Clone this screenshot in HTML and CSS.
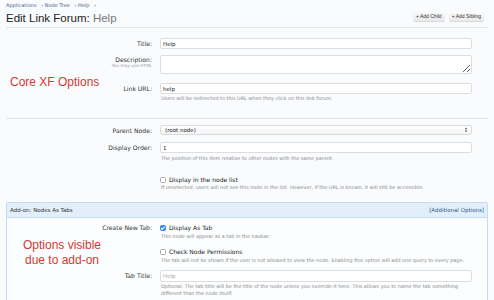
FILE: index.html
```html
<!DOCTYPE html>
<html lang="en">
<head>
    <meta charset="UTF-8">
    <meta name="viewport" content="width=device-width, initial-scale=1.0">
    <title>Edit Link Forum: Help</title>
    <link rel="stylesheet" href="styles.css">
</head>
<body>
    <div class="page">
        <div class="crumbs">
            <a href="#">Applications</a> &rsaquo;
            <a href="#">Node Tree</a> &rsaquo;
            <a href="#">Help</a> &rsaquo;
        </div>
        <div class="header">
            <h1>Edit Link Forum: <span class="muted">Help</span></h1>
            <div class="top-buttons">
                <a href="#" class="small-button">+ Add Child</a>
                <a href="#" class="small-button">+ Add Sibling</a>
            </div>
        </div>

        <form class="form">
            <div class="section core">
                <span class="note note-core">Core XF Options</span>
                <div class="row">
                    <label class="label">Title:</label>
                    <div class="control"><input class="text-input" type="text" value="Help"></div>
                </div>
                <div class="row row-desc">
                    <label class="label">Description:<span class="label-hint">You may use HTML</span></label>
                    <div class="control"><textarea class="text-input textarea"></textarea></div>
                </div>
                <div class="row row-link">
                    <label class="label">Link URL:</label>
                    <div class="control">
                        <input class="text-input" type="text" value="help">
                        <p class="hint">Users will be redirected to this URL when they click on this link forum.</p>
                    </div>
                </div>
            </div>

            <div class="section nodes">
                <div class="row">
                    <label class="label">Parent Node:</label>
                    <div class="control">
                        <div class="select">(root node)<span class="select-arrows">&#9650;<br>&#9660;</span></div>
                    </div>
                </div>
                <div class="row row-order">
                    <label class="label">Display Order:</label>
                    <div class="control">
                        <input class="text-input" type="text" value="1">
                        <p class="hint">The position of this item relative to other nodes with the same parent.</p>
                    </div>
                </div>
                <div class="row row-check">
                    <div class="label"></div>
                    <div class="control">
                        <label class="check"><span class="box"></span>Display in the node list</label>
                        <p class="hint">If unselected, users will not see this node in the list. However, if the URL is known, it will still be accessible.</p>
                    </div>
                </div>
            </div>

            <div class="addon">
                <div class="addon-head">
                    <span>Add-on: Nodes As Tabs</span>
                    <a href="#" class="addon-link">[Additional Options]</a>
                </div>
                <div class="addon-body">
                    <span class="note note-addon">Options visible<br>due to add-on</span>
                    <div class="row row-tab">
                        <label class="label">Create New Tab:</label>
                        <div class="control">
                            <label class="check"><span class="box checked"></span>Display As Tab</label>
                            <p class="hint">This node will appear as a tab in the navbar.</p>
                            <label class="check check-gap"><span class="box"></span>Check Node Permissions</label>
                            <p class="hint">The tab will not be shown if the user is not allowed to view the node. Enabling this option will add one query to every page.</p>
                        </div>
                    </div>
                    <div class="row row-tabtitle">
                        <label class="label">Tab Title:</label>
                        <div class="control">
                            <input class="text-input placeholder" type="text" placeholder="Help">
                            <p class="hint">Optional. The tab title will be the title of the node unless you override it here. This allows you to name the tab something different than the node itself.</p>
                        </div>
                    </div>
                </div>
            </div>
        </form>
    </div>
</body>
</html>
```

FILE: styles.css
```css
body {
    margin: 0;
    background-color: #fafbfd;
    color: #333;
    font-family: "DejaVu Sans", Verdana, sans-serif;
    font-size: 6px;
    overflow: hidden;
}
a {
    color: inherit;
    text-decoration: none;
}
.page {
    padding: 0 6px;
    width: 482px;
    height: 300px;
    overflow: hidden;
}
.crumbs {
    font-size: 5px;
    color: #45608a;
    height: 8px;
    line-height: 8px;
    padding-top: 1px;
}
.crumbs a {
    margin-right: 3px;
}
.header {
    display: flex;
    justify-content: space-between;
    align-items: flex-start;
    border-bottom: 1px solid #e4e6ea;
    height: 18px;
}
.header h1 {
    margin: 0;
    padding-top: 1px;
    font-family: "Liberation Sans", Arial, sans-serif;
    font-weight: normal;
    font-size: 11.5px;
    line-height: 17px;
    color: #222;
}
.muted {
    color: #777;
}
.top-buttons {
    display: flex;
    gap: 4px;
    margin-top: 3px;
    margin-right: 4px;
}
.small-button {
    font-family: "Liberation Sans", Arial, sans-serif;
    font-size: 5px;
    color: #333;
    background: linear-gradient(#fafafa, #e9e9eb);
    border-radius: 2px;
    box-shadow: 0 1px 1px rgba(0, 0, 0, 0.15);
    padding: 0 3px;
    height: 9px;
    line-height: 9px;
}
.form {
    padding-top: 10px;
}
.section {
    position: relative;
}
.core {
    border-bottom: 1px solid #e4e6ea;
    padding-bottom: 10px;
}
.nodes {
    padding-top: 6px;
    padding-bottom: 5px;
}
.row {
    display: grid;
    grid-template-columns: 146px 312px;
    column-gap: 8px;
    margin-bottom: 6px;
}
.label {
    text-align: right;
    font-size: 6.1px;
    line-height: 11px;
    color: #333;
}
.label-hint {
    display: block;
    font-size: 4.3px;
    line-height: 3px;
    color: #999;
}
.row-desc .label {
    line-height: 8px;
    padding-top: 1px;
}
.row-desc {
    margin-bottom: 9px;
}
.text-input {
    display: block;
    box-sizing: border-box;
    width: 312px;
    height: 11px;
    margin: 0;
    padding: 0 2px;
    border: 1px solid #dcdde0;
    border-radius: 2px;
    background: #fff;
    font-family: "DejaVu Sans", Verdana, sans-serif;
    font-size: 5.5px;
    color: #222;
}
.textarea {
    height: 19px;
    resize: vertical;
}
.placeholder::placeholder {
    color: #aaa;
}
.hint {
    margin: 0;
    font-size: 4.9px;
    line-height: 7px;
    color: #8a8a8a;
    padding-left: 1px;
}
.row-link .hint {
    padding-top: 1px;
}
.select {
    position: relative;
    box-sizing: border-box;
    height: 10px;
    line-height: 8px;
    padding: 0 4px;
    border: 1px solid #d8d9dc;
    border-radius: 3px;
    background: linear-gradient(#ffffff, #f3f3f5);
    font-size: 5.5px;
    color: #222;
}
.select-arrows {
    position: absolute;
    right: 4px;
    top: 2px;
    font-size: 2.5px;
    line-height: 2.5px;
    color: #222;
}
.row-order {
    margin-top: 5px;
}
.row-order .hint {
    padding-top: 2px;
}
.row-check {
    margin-top: 14px;
}
.check {
    display: flex;
    align-items: center;
    gap: 3px;
    font-size: 6px;
    line-height: 8px;
    color: #222;
}
.box {
    display: inline-block;
    box-sizing: border-box;
    width: 6px;
    height: 6px;
    border: 1px solid #aaa;
    border-radius: 1.5px;
    background: #fff;
    position: relative;
}
.box.checked {
    background: #3a8ee6;
    border-color: #3a8ee6;
}
.box.checked::after {
    content: "";
    position: absolute;
    left: 1.3px;
    top: 0.2px;
    width: 1.2px;
    height: 2.6px;
    border: solid #fff;
    border-width: 0 0.8px 0.8px 0;
    transform: rotate(45deg);
}
.check-gap {
    margin-top: 8px;
}
.addon {
    border: 1px solid #c4dcf1;
    border-radius: 2px;
    background: #fcfdfe;
    height: 110px;
}
.addon-head {
    display: flex;
    justify-content: space-between;
    align-items: center;
    height: 14px;
    padding: 0 3px;
    background: #e2effb;
    border-bottom: 1px solid #c4dcf1;
    font-size: 5.5px;
    color: #333;
}
.addon-link {
    color: #2c5d8c;
}
.addon-body {
    position: relative;
    padding-top: 6px;
}
.row-tab,
.row-tabtitle {
    grid-template-columns: 145px 312px;
}
.row-tab .label {
    line-height: 8px;
}
.row-tab .hint {
    padding-top: 1px;
}
.row-tabtitle {
    margin-top: 5px;
}
.row-tabtitle .text-input {
    height: 12px;
}
.row-tabtitle .label {
    line-height: 12px;
}
.row-tabtitle .hint {
    line-height: 7px;
    padding-top: 1px;
}
.note {
    position: absolute;
    font-family: "Liberation Sans", Arial, sans-serif;
    color: #d23a32;
    font-size: 12px;
    line-height: 15px;
}
.note-core {
    left: 4px;
    top: 37px;
}
.note-addon {
    left: 16px;
    top: 20px;
    text-align: center;
}
```
